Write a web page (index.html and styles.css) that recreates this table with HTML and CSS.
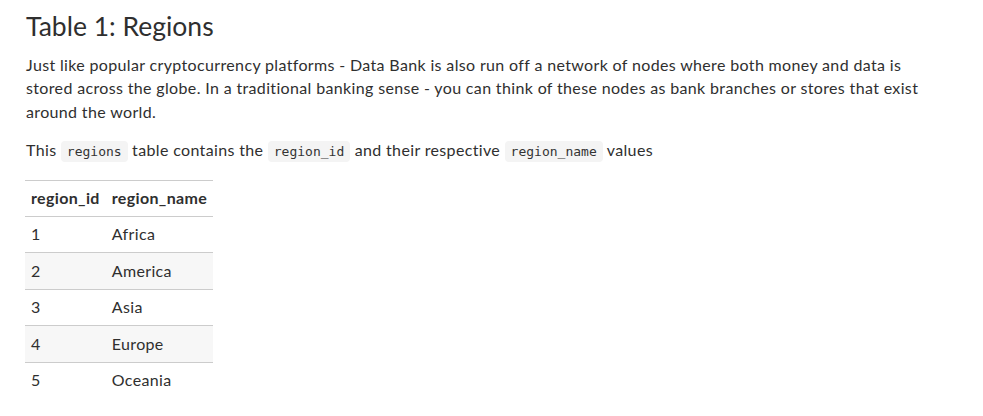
FILE: index.html
```html
<!DOCTYPE html>
<html lang="en">
<head>
<meta charset="utf-8">
<title>Table 1: Regions</title>
<link rel="stylesheet" href="styles.css">
</head>
<body>
<main class="content">
  <h3 class="title">Table 1: Regions</h3>
  <p class="para">Just like popular cryptocurrency platforms - Data Bank is also run off a network of nodes where both money and data is stored across the globe. In a traditional banking sense - you can think of these nodes as bank branches or stores that exist around the world.</p>
  <p class="para">This <code class="code">regions</code> table contains the <code class="code">region_id</code> and their respective <code class="code">region_name</code> values</p>
  <table class="data-table">
    <thead>
      <tr><th class="cell">region_id</th><th class="cell">region_name</th></tr>
    </thead>
    <tbody>
      <tr class="row"><td class="cell">1</td><td class="cell">Africa</td></tr>
      <tr class="row"><td class="cell">2</td><td class="cell">America</td></tr>
      <tr class="row"><td class="cell">3</td><td class="cell">Asia</td></tr>
      <tr class="row"><td class="cell">4</td><td class="cell">Europe</td></tr>
      <tr class="row"><td class="cell">5</td><td class="cell">Oceania</td></tr>
    </tbody>
  </table>
</main>
</body>
</html>
```

FILE: styles.css
```css
html, body {
  margin: 0;
  padding: 0;
  background: #fff;
}

body {
  font-family: Lato, "Open Sans", sans-serif;
  font-size: 16px;
  line-height: 1.45;
  letter-spacing: 0.35px;
  color: #2f2f2f;
}

.content {
  padding: 12px 26px 0 26px;
  max-width: 895px;
}

.title {
  font-size: 26.5px;
  font-weight: 400;
  letter-spacing: 0;
  line-height: 1.1;
  margin: 0 0 12px 0;
  color: #2f2f2f;
}

.para {
  margin: 0 0 15px 0;
}

.code {
  font-family: "DejaVu Sans Mono", "Liberation Mono", monospace;
  font-size: 13px;
  letter-spacing: 0;
  background: #f4f4f4;
  border-radius: 4px;
  padding: 3px 6px;
  color: #333;
}

.data-table {
  border-collapse: collapse;
  margin-top: 18px;
  margin-left: -1px;
  border-top: 1px solid #ccc;
}

.cell {
  text-align: left;
  padding: 6.3px 6px;
  line-height: 1.42857;
  border-bottom: 1px solid #ccc;
  vertical-align: top;
}

th.cell {
  font-weight: 700;
}

.row:nth-child(even) {
  background: #f7f7f7;
}

.row:last-child .cell {
  border-bottom: none;
}
```
